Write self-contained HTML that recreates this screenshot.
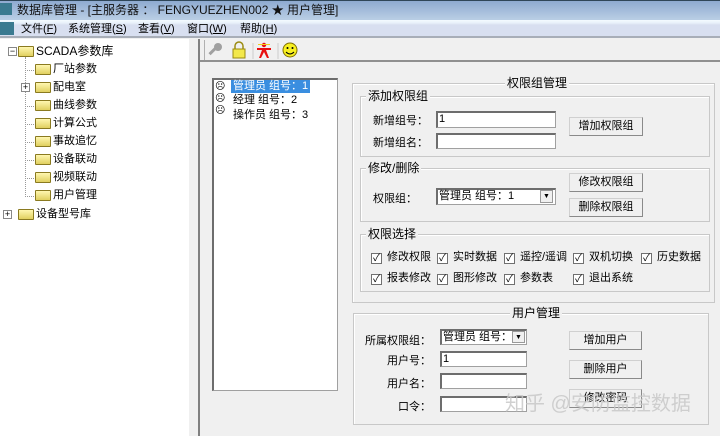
<!DOCTYPE html>
<html><head><meta charset="utf-8"><style>
*{margin:0;padding:0;box-sizing:border-box}
body{width:720px;height:436px;overflow:hidden;background:#f0f0f0;font-family:"Liberation Sans","Noto Sans CJK SC",sans-serif;font-size:11px;color:#000;position:relative}
.a{position:absolute;white-space:nowrap}
.grp{position:absolute;border:1px solid #c8c8c8;box-shadow:inset 1px 1px 0 #fff}
.gt{position:absolute;background:#f0f0f0;padding:0 2px;line-height:14px;top:-8px;font-size:12px}
.inp{position:absolute;background:#fff;border:1px solid #a0a0a0;border-top:2px solid #6d6d6d;border-left:2px solid #6d6d6d;font-size:11px;padding-left:1px;line-height:13px}
.btn{position:absolute;background:#f0f0f0;border:1px solid #d0d0d0;border-right-color:#8a8a8a;border-bottom-color:#8a8a8a;text-align:center;line-height:17px;font-size:11px}
.cb{position:absolute;white-space:nowrap;line-height:14px;font-size:11px}
.cb i{display:inline-block;width:11px;height:11px;border:1px solid #707070;background:#fff;vertical-align:-1px;margin-right:5px;position:relative;font-style:normal;font-size:10px;line-height:9px;text-align:center}
.fold{position:absolute;width:16px;height:11px;background:linear-gradient(#fff7b0,#e0d060);border:1px solid #8a7a20;border-radius:1px}
.tl{position:absolute;line-height:18px;font-size:11px}
.m{position:absolute;top:21px;line-height:16px;font-size:11px}
</style></head><body>
<div class="a" style="left:0;top:0;width:720px;height:20px;background:linear-gradient(#2f4658 0,#2f4658 1px,#8eaad0 1px,#b8cde4 19px);"></div>
<div class="a" style="left:0;top:20px;width:720px;height:18px;background:linear-gradient(#f4fbff 0,#e8f0fa 3px,#d8dff0 5px,#d8dff0 16px,#a8aeb8 16px)"></div>
<div class="a" style="left:0;top:3px;width:12px;height:12px;background:#3a7a90"></div>
<div class="a" style="left:0;top:22px;width:14px;height:13px;background:#3a7a90"></div>
<div class="a" style="left:17px;top:2px;font-size:12px;line-height:16px;color:#111">数据库管理 - [主服务器 ： FENGYUEZHEN002 ★ 用户管理]</div>
<div class="m" style="left:21px">文件(<u>F</u>)</div>
<div class="m" style="left:68px">系统管理(<u>S</u>)</div>
<div class="m" style="left:138px">查看(<u>V</u>)</div>
<div class="m" style="left:187px">窗口(<u>W</u>)</div>
<div class="m" style="left:240px">帮助(<u>H</u>)</div>
<div class="a" style="left:0;top:39px;width:189px;height:397px;background:#fff"></div>
<div class="a" style="left:198px;top:39px;width:2px;height:397px;background:#808080"></div>
<div class="a" style="left:204px;top:40px;width:1px;height:20px;background:#b0b0b0"></div>
<div class="a" style="left:200px;top:60px;width:520px;height:2px;background:#909090"></div>
<div class="a" style="left:25px;top:57px;height:140px;border-left:1px dotted #999"></div>
<div class="a" style="left:8px;top:47px;width:9px;height:9px;border:1px solid #888;font-size:9px;line-height:7px;text-align:center;background:#fff">−</div>
<div class="fold" style="left:18px;top:46px"></div><div class="tl" style="left:36px;top:42px;font-size:12px">SCADA参数库</div>
<div class="a" style="left:25px;top:70px;width:9px;border-top:1px dotted #999"></div><div class="fold" style="left:35px;top:64px"></div><div class="tl" style="left:53px;top:60px">厂站参数</div>
<div class="a" style="left:21px;top:83px;width:9px;height:9px;border:1px solid #888;font-size:9px;line-height:7px;text-align:center;background:#fff">+</div><div class="fold" style="left:35px;top:82px"></div><div class="tl" style="left:53px;top:78px">配电室</div>
<div class="a" style="left:25px;top:106px;width:9px;border-top:1px dotted #999"></div><div class="fold" style="left:35px;top:100px"></div><div class="tl" style="left:53px;top:96px">曲线参数</div>
<div class="a" style="left:25px;top:124px;width:9px;border-top:1px dotted #999"></div><div class="fold" style="left:35px;top:118px"></div><div class="tl" style="left:53px;top:114px">计算公式</div>
<div class="a" style="left:25px;top:142px;width:9px;border-top:1px dotted #999"></div><div class="fold" style="left:35px;top:136px"></div><div class="tl" style="left:53px;top:132px">事故追忆</div>
<div class="a" style="left:25px;top:160px;width:9px;border-top:1px dotted #999"></div><div class="fold" style="left:35px;top:154px"></div><div class="tl" style="left:53px;top:150px">设备联动</div>
<div class="a" style="left:25px;top:178px;width:9px;border-top:1px dotted #999"></div><div class="fold" style="left:35px;top:172px"></div><div class="tl" style="left:53px;top:168px">视频联动</div>
<div class="a" style="left:25px;top:196px;width:9px;border-top:1px dotted #999"></div><div class="fold" style="left:35px;top:190px"></div><div class="tl" style="left:53px;top:186px">用户管理</div>
<div class="a" style="left:3px;top:210px;width:9px;height:9px;border:1px solid #888;font-size:9px;line-height:7px;text-align:center;background:#fff">+</div><div class="fold" style="left:18px;top:209px"></div><div class="tl" style="left:36px;top:205px">设备型号库</div>
<svg class="a" style="left:206px;top:41px" width="100" height="18">
<g fill="#a0a0a0"><circle cx="12" cy="6" r="4"/><rect x="2" y="9" width="8" height="3" transform="rotate(-45 6 10)"/></g>
<rect x="27" y="8" width="12" height="9" fill="#f3e84a" stroke="#9a8a10"/><path d="M29 8V5a4 4 0 0 1 8 0v3" fill="none" stroke="#9a8a10" stroke-width="1.5"/>
<line x1="47" y1="2" x2="47" y2="18" stroke="#ccc"/>
<g fill="#e81010"><circle cx="58" cy="4" r="2.2"/><path d="M51 7h14v2h-5l3 8h-2l-3-6-3 6h-2l3-8h-5z"/></g>
<rect x="52" y="3" width="12" height="1" fill="#f0d020"/>
<line x1="72" y1="2" x2="72" y2="18" stroke="#ccc"/>
<circle cx="84" cy="9" r="7" fill="#f8f020" stroke="#807000"/><circle cx="81.5" cy="7" r="1" fill="#000"/><circle cx="86.5" cy="7" r="1" fill="#000"/><path d="M80 11q4 4 8 0" fill="none" stroke="#000"/>
</svg>
<div class="a" style="left:212px;top:78px;width:126px;height:313px;background:#fff;border:1px solid #a0a0a0;border-left:2px solid #6d6d6d;border-top:2px solid #6d6d6d"></div>
<div class="a" style="left:215px;top:81px;font-size:10px;line-height:12px">☹<br>☹<br>☹</div>
<div class="a" style="left:231px;top:80px;background:#3a8ee0;color:#fff;line-height:13px;padding:0 2px">管理员 组号：1</div>
<div class="a" style="left:233px;top:94px;line-height:13px">经理 组号：2</div>
<div class="a" style="left:233px;top:109px;line-height:13px">操作员 组号：3</div>
<div class="grp" style="left:352px;top:83px;width:363px;height:220px"><div class="gt" style="left:152px">权限组管理</div></div>
<div class="grp" style="left:360px;top:96px;width:350px;height:61px"><div class="gt" style="left:5px">添加权限组</div></div>
<div class="a" style="left:373px;top:112px">新增组号：</div>
<div class="inp" style="left:436px;top:111px;width:120px;height:17px">1</div>
<div class="a" style="left:373px;top:134px">新增组名：</div>
<div class="inp" style="left:436px;top:133px;width:120px;height:16px"></div>
<div class="btn" style="left:569px;top:117px;width:74px;height:19px">增加权限组</div>
<div class="grp" style="left:360px;top:168px;width:350px;height:54px"><div class="gt" style="left:5px">修改/删除</div></div>
<div class="a" style="left:373px;top:190px">权限组：</div>
<div class="inp" style="left:436px;top:188px;width:120px;height:17px;font-size:11px">管理员 组号：1</div>
<div class="a" style="left:540px;top:190px;width:13px;height:13px;background:#f0f0f0;border:1px solid #999;font-size:7px;text-align:center;line-height:12px">▼</div>
<div class="btn" style="left:569px;top:173px;width:74px;height:19px">修改权限组</div>
<div class="btn" style="left:569px;top:198px;width:74px;height:19px">删除权限组</div>
<div class="grp" style="left:360px;top:234px;width:350px;height:58px"><div class="gt" style="left:5px">权限选择</div></div>
<div class="cb" style="left:371px;top:250px"><i>✓</i>修改权限</div>
<div class="cb" style="left:437px;top:250px"><i>✓</i>实时数据</div>
<div class="cb" style="left:504px;top:250px"><i>✓</i>遥控/遥调</div>
<div class="cb" style="left:573px;top:250px"><i>✓</i>双机切换</div>
<div class="cb" style="left:641px;top:250px"><i>✓</i>历史数据</div>
<div class="cb" style="left:371px;top:271px"><i>✓</i>报表修改</div>
<div class="cb" style="left:437px;top:271px"><i>✓</i>图形修改</div>
<div class="cb" style="left:504px;top:271px"><i>✓</i>参数表</div>
<div class="cb" style="left:573px;top:271px"><i>✓</i>退出系统</div>
<div class="grp" style="left:353px;top:313px;width:356px;height:112px"><div class="gt" style="left:156px">用户管理</div></div>
<div class="a" style="left:365px;top:332px">所属权限组：</div>
<div class="inp" style="left:440px;top:329px;width:87px;height:16px">管理员 组号：</div>
<div class="a" style="left:512px;top:331px;width:13px;height:12px;background:#f0f0f0;border:1px solid #999;font-size:7px;text-align:center;line-height:11px">▼</div>
<div class="a" style="left:387px;top:352px">用户号：</div>
<div class="inp" style="left:440px;top:351px;width:87px;height:16px">1</div>
<div class="a" style="left:387px;top:375px">用户名：</div>
<div class="inp" style="left:440px;top:373px;width:87px;height:16px"></div>
<div class="a" style="left:398px;top:398px">口令：</div>
<div class="inp" style="left:440px;top:396px;width:87px;height:16px"></div>
<div class="btn" style="left:569px;top:331px;width:73px;height:19px">增加用户</div>
<div class="btn" style="left:569px;top:360px;width:73px;height:19px">删除用户</div>
<div class="btn" style="left:569px;top:389px;width:73px;height:19px">修改密码</div>
<div class="a" style="left:505px;top:392px;font-size:20px;color:rgba(200,200,200,.85);line-height:24px">知乎 @安防监控数据</div>
</body></html>
